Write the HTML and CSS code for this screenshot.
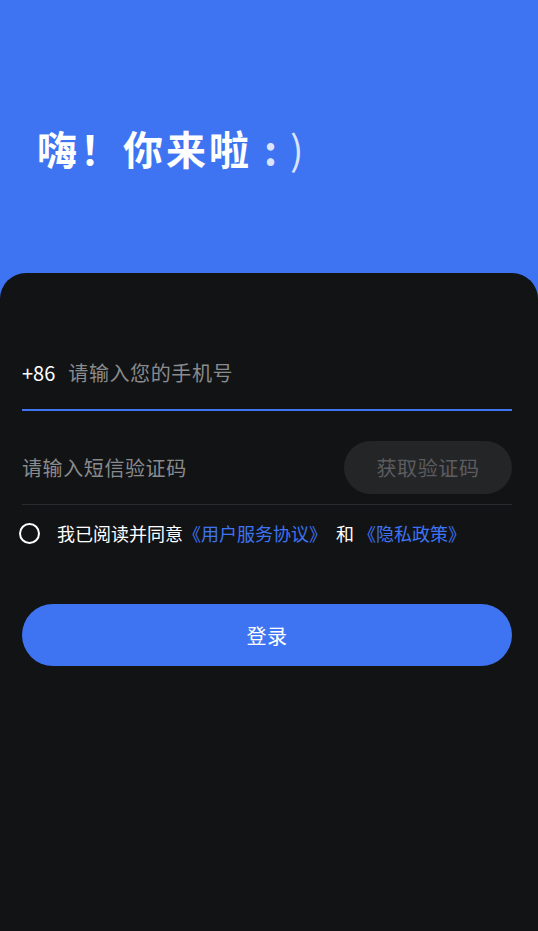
FILE: index.html
```html
<!DOCTYPE html>
<html lang="zh-CN">
<head>
  <meta charset="UTF-8" />
  <meta name="viewport" content="width=device-width, initial-scale=1.0" />
  <title>登录</title>
  <link rel="stylesheet" href="styles.css">
</head>
<body>
  <div class="header">
    <h1 class="title">嗨！你来啦<span class="smile"><span class="colon">:</span><span class="paren">)</span></span></h1>
  </div>
  <div class="card">
    <div class="row phone-row">
      <span class="prefix">+86</span>
      <span class="placeholder">请输入您的手机号</span>
    </div>
    <div class="row code-row">
      <span class="placeholder">请输入短信验证码</span>
      <button class="code-btn">获取验证码</button>
    </div>
    <div class="agree">
      <span class="radio"></span>
      <span class="agree-text">我已阅读并同意<a class="link">《用户服务协议》</a> <span class="and">和</span> <a class="link">《隐私政策》</a></span>
    </div>
    <button class="login-btn">登录</button>
  </div>
</body>
</html>
```

FILE: styles.css
```css
body {
  margin: 0;
  background-color: #3e74f2;
  font-family: "Noto Sans CJK SC", "Noto Sans", sans-serif;
  color: white;
}
.header {
  height: 273px;
  box-sizing: border-box;
  padding: 118px 0 0 37px;
}
.title {
  margin: 0;
  font-size: 40px;
  line-height: 60px;
  font-weight: bold;
  letter-spacing: 3px;
}
.smile {
  color: rgba(255, 255, 255, 0.82);
}
.colon {
  margin-left: 12px;
}
.paren {
  margin-left: 10px;
  font-weight: normal;
}
.card {
  background-color: #121315;
  border-radius: 26px 26px 0 0;
  min-height: 658px;
  box-sizing: border-box;
  padding: 64px 26px 0 22px;
}
.row {
  display: flex;
  align-items: center;
}
.phone-row {
  height: 70px;
  padding-bottom: 2px;
  border-bottom: 2px solid #3e74f2;
  font-size: 20px;
}
.prefix {
  margin-right: 13px;
}
.placeholder {
  color: #8a8b8d;
  font-size: 20px;
  letter-spacing: 0.6px;
}
.code-row {
  justify-content: space-between;
  padding: 30px 0 10px;
  border-bottom: 1px solid #2a2b2e;
}
.code-btn {
  width: 168px;
  height: 53px;
  border: none;
  border-radius: 27px;
  background-color: #242527;
  color: #5c5d60;
  font-family: inherit;
  font-size: 20px;
  letter-spacing: 0.6px;
}
.agree {
  display: flex;
  align-items: center;
  margin-top: 18px;
  height: 20px;
  font-size: 18px;
}
.radio {
  width: 17px;
  height: 17px;
  border: 2px solid white;
  border-radius: 50%;
  margin-left: -3px;
  margin-right: 17px;
}
.and {
  margin-left: 5px;
}
.link {
  color: #3e74f2;
}
.login-btn {
  display: block;
  width: 100%;
  height: 62px;
  margin-top: 61px;
  border: none;
  border-radius: 31px;
  background-color: #3e74f2;
  color: white;
  font-family: inherit;
  font-size: 20px;
  letter-spacing: 0.6px;
}
```
